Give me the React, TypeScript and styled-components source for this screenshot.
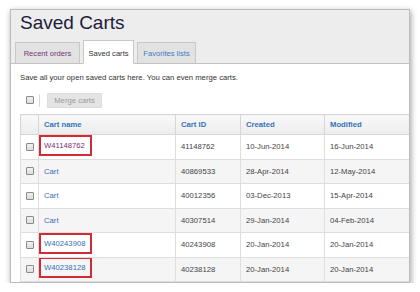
import React from "react";
import styled, { createGlobalStyle } from "styled-components";

const Global = createGlobalStyle`
  html, body { margin: 0; padding: 0; background: #ffffff; }
  body { font-family: "Liberation Sans", Arial, sans-serif; }
`;

const Panel = styled.div`
  margin: 9px 0 0 10px;
  width: 400px;
  height: 274px;
  box-sizing: border-box;
  border: 1px solid #bcbcbc;
  box-shadow: 1px 2px 6px rgba(0, 0, 0, 0.38);
  overflow: hidden;
  background: #fff;
`;

const Header = styled.div`
  background: #ededed;
  border-bottom: 1px solid #c2c2c2;
  height: 53px;
  display: flex;
  flex-direction: column;
  justify-content: space-between;
`;

const Title = styled.h1`
  margin: 0;
  padding: 2px 0 0 9px;
  font-family: "Liberation Sans", Arial, sans-serif;
  font-weight: normal;
  font-size: 19px;
  line-height: 22px;
  color: #1c1c3a;
`;

const Tabs = styled.div`
  display: flex;
  align-items: flex-end;
  gap: 3px;
  padding-left: 4px;
  margin-bottom: -1px;
`;

const Tab = styled.div<{ $active?: boolean; $color: string; $w: number }>`
  box-sizing: border-box;
  width: ${(p) => p.$w}px;
  height: ${(p) => (p.$active ? 24 : 22)}px;
  display: flex;
  align-items: center;
  justify-content: center;
  padding-top: ${(p) => (p.$active ? 2 : 0)}px;
  font-size: 7.6px;
  color: ${(p) => p.$color};
  background: ${(p) => (p.$active ? "#ffffff" : "#e2e2e2")};
  border: 1px solid #c8c8c8;
  border-bottom: ${(p) => (p.$active ? "1px solid #ffffff" : "1px solid #c2c2c2")};
`;

const Body = styled.div`
  padding: 0 0 0 9px;
`;

const Intro = styled.p`
  margin: 0;
  padding-top: 7px;
  height: 14px;
  line-height: 14px;
  font-size: 7.7px;
  color: #333;
`;

const Toolbar = styled.div`
  display: flex;
  align-items: center;
  height: 16px;
  margin-top: 7px;
  padding-left: 6px;
`;

const Check = styled.span`
  display: inline-block;
  box-sizing: border-box;
  width: 8px;
  height: 8px;
  border: 1px solid #8a8a8a;
  background: linear-gradient(#f2f2f2, #dcdcdc);
  border-radius: 1px;
`;

const Divider = styled.span`
  width: 1px;
  height: 13px;
  background: #d8d8d8;
  margin: 0 7px 0 5px;
`;

const MergeButton = styled.button`
  box-sizing: border-box;
  width: 55px;
  height: 15px;
  padding: 0;
  border: 1px solid #dcdcdc;
  background: #e4e4e4;
  color: #9a9a9a;
  font-family: "Liberation Sans", Arial, sans-serif;
  font-size: 7.7px;
  border-radius: 1px;
`;

const Table = styled.table`
  margin-top: 6px;
  border-collapse: collapse;
  table-layout: fixed;
  width: 392px;
  font-size: 7.7px;
`;

const Th = styled.th<{ $w: number }>`
  box-sizing: border-box;
  width: ${(p) => p.$w}px;
  height: 20px;
  padding: 0 0 0 5px;
  text-align: left;
  font-weight: bold;
  color: #3473bb;
  background: linear-gradient(#f9f9f9, #ececec);
  border: 1px solid #d6d6d6;
`;

const Row = styled.tr<{ $alt: boolean }>`
  background: ${(p) => (p.$alt ? "#f5f5f5" : "#ffffff")};
`;

const Td = styled.td`
  box-sizing: border-box;
  height: 24.5px;
  padding: 0 0 0 5px;
  color: #444;
  border: 1px solid #dedede;
  white-space: nowrap;
  overflow: hidden;
`;

const CheckCell = styled(Td)`
  padding: 0;
  text-align: center;
  line-height: 0;
`;

const NameLink = styled.a<{ $visited?: boolean }>`
  color: ${(p) => (p.$visited ? "#7a2f72" : "#3570b5")};
  text-decoration: none;
`;

const Highlight = styled.span`
  display: inline-block;
  box-sizing: border-box;
  border: 2px solid #d42a35;
  height: 21px;
  line-height: 17px;
  padding: 0 5px 0 3px;
  margin: -3px 0 0 -5px;
  vertical-align: middle;
`;

const rows = [
  { name: "W41148762", id: "41148762", created: "10-Jun-2014", modified: "16-Jun-2014", hl: true, visited: true },
  { name: "Cart", id: "40869533", created: "28-Apr-2014", modified: "12-May-2014" },
  { name: "Cart", id: "40012356", created: "03-Dec-2013", modified: "15-Apr-2014" },
  { name: "Cart", id: "40307514", created: "29-Jan-2014", modified: "04-Feb-2014" },
  { name: "W40243908", id: "40243908", created: "20-Jan-2014", modified: "20-Jan-2014", hl: true },
  { name: "W40238128", id: "40238128", created: "20-Jan-2014", modified: "20-Jan-2014", hl: true },
];

export default function App() {
  return (
    <>
      <Global />
      <Panel>
        <Header>
          <Title>Saved Carts</Title>
          <Tabs>
            <Tab $w={65} $color="#74357a">Recent orders</Tab>
            <Tab $w={51} $active $color="#333333">Saved carts</Tab>
            <Tab $w={59} $color="#3d7cc6">Favorites lists</Tab>
          </Tabs>
        </Header>
        <Body>
          <Intro>Save all your open saved carts here. You can even merge carts.</Intro>
          <Toolbar>
            <Check />
            <Divider />
            <MergeButton>Merge carts</MergeButton>
          </Toolbar>
          <Table>
            <thead>
              <tr>
                <Th $w={18} />
                <Th $w={137}>Cart name</Th>
                <Th $w={65}>Cart ID</Th>
                <Th $w={84}>Created</Th>
                <Th $w={88}>Modified</Th>
              </tr>
            </thead>
            <tbody>
              {rows.map((r, i) => (
                <Row key={i} $alt={i % 2 === 1}>
                  <CheckCell>
                    <Check />
                  </CheckCell>
                  <Td>
                    {r.hl ? (
                      <Highlight>
                        <NameLink $visited={r.visited}>{r.name}</NameLink>
                      </Highlight>
                    ) : (
                      <NameLink>{r.name}</NameLink>
                    )}
                  </Td>
                  <Td>{r.id}</Td>
                  <Td>{r.created}</Td>
                  <Td>{r.modified}</Td>
                </Row>
              ))}
            </tbody>
          </Table>
        </Body>
      </Panel>
    </>
  );
}
